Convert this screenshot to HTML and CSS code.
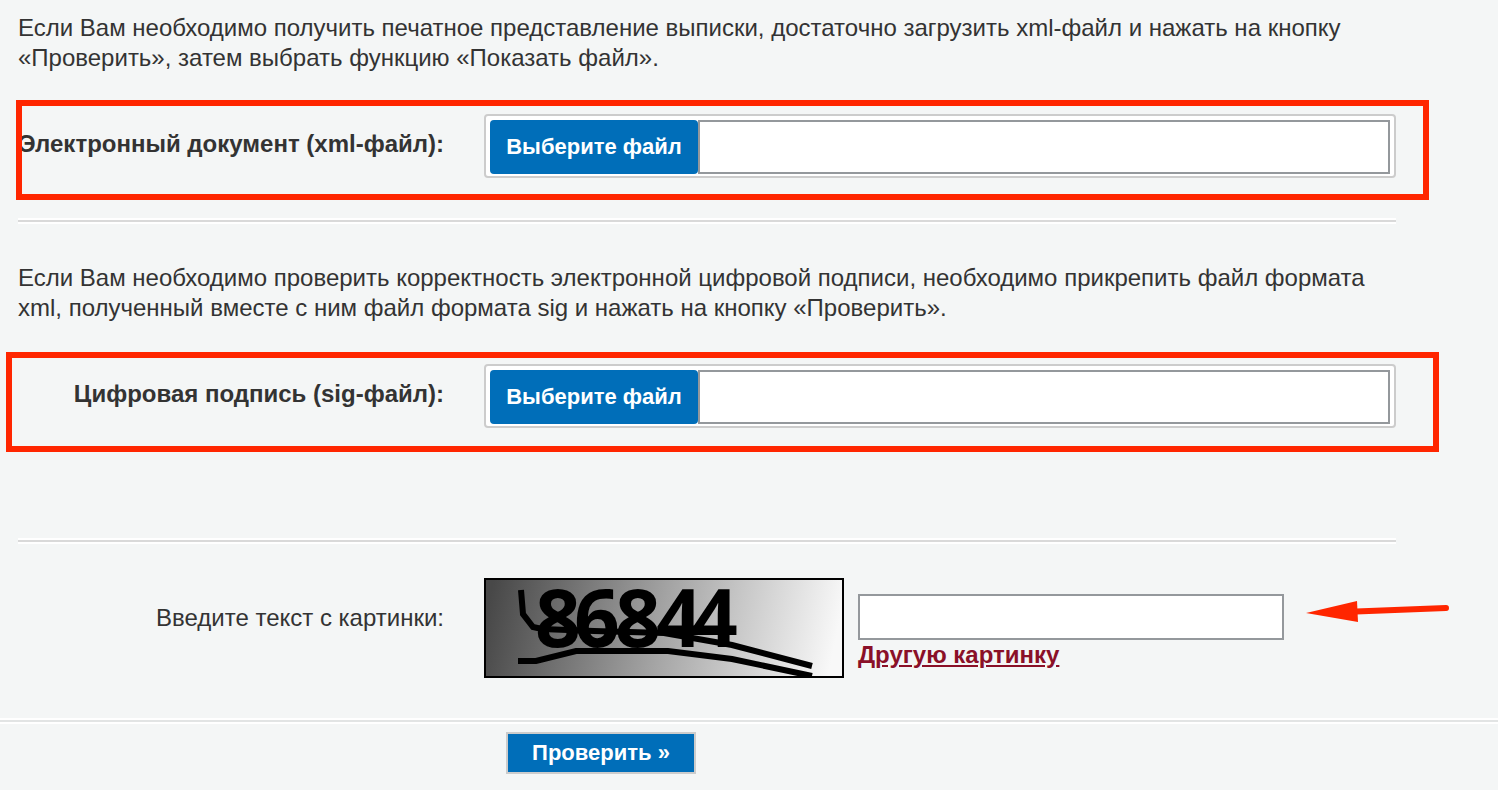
FILE: index.html
```html
<!DOCTYPE html>
<html lang="ru">
<head>
    <meta charset="UTF-8">
    <meta name="viewport" content="width=device-width, initial-scale=1.0">
    <title>Проверка электронного документа</title>
    <link rel="stylesheet" href="styles.css">
</head>
<body>
    <form class="check-form">
        <div class="fields">
            <p class="hint">Если Вам необходимо получить печатное представление выписки, достаточно загрузить xml-файл и нажать на кнопку «Проверить», затем выбрать функцию «Показать файл».</p>
            <div class="row">
                <label class="row-label bold" for="xmlFile">Электронный документ (xml-файл):</label>
                <div class="file-box">
                    <button type="button" class="file-btn">Выберите файл</button>
                    <input type="text" class="file-name" id="xmlFile" readonly>
                </div>
                <div class="mark mark-xml"></div>
            </div>

            <hr class="divider">

            <p class="hint">Если Вам необходимо проверить корректность электронной цифровой подписи, необходимо прикрепить файл формата xml, полученный вместе с ним файл формата sig и нажать на кнопку «Проверить».</p>
            <div class="row row-sig">
                <label class="row-label bold" for="sigFile">Цифровая подпись (sig-файл):</label>
                <div class="file-box">
                    <button type="button" class="file-btn">Выберите файл</button>
                    <input type="text" class="file-name" id="sigFile" readonly>
                </div>
                <div class="mark mark-sig"></div>
            </div>

            <hr class="divider">

            <div class="row captcha-row">
                <label class="row-label" for="captcha">Введите текст с картинки:</label>
                <div class="captcha">
                    <svg class="captcha-img" viewBox="0 0 360 100">
                        <defs>
                            <linearGradient id="shade" gradientUnits="userSpaceOnUse" x1="10" y1="0" x2="350" y2="70">
                                <stop offset="0" stop-color="#484848"/>
                                <stop offset="0.5" stop-color="#a4a4a4"/>
                                <stop offset="1" stop-color="#f8f8f8"/>
                            </linearGradient>
                        </defs>
                        <rect x="1" y="1" width="358" height="98" fill="url(#shade)" stroke="#000" stroke-width="2"/>
                        <text class="captcha-text" x="51 90 131 172 208" y="69">86844</text>
                        <g fill="none" stroke="#000" stroke-width="6">
                            <path d="M37 12L39 36L49 49L58 51L110 53L180 55L248 67L328 88"/>
                            <path d="M34 83H52L92 73H184L248 81L328 98"/>
                        </g>
                    </svg>
                    <div class="captcha-entry">
                        <input type="text" class="captcha-input" id="captcha">
                        <a href="#" class="captcha-link">Другую картинку</a>
                        <svg class="arrow" viewBox="0 0 144 24">
                            <path d="M0 13L51 1L52 22Z" fill="#ff2600"/>
                            <path d="M50 11.5L140 8" stroke="#ff2600" stroke-width="6" stroke-linecap="round"/>
                        </svg>
                    </div>
                </div>
            </div>
        </div>

        <hr class="divider divider-full">

        <div class="actions">
            <button type="submit" class="submit-btn">Проверить »</button>
        </div>
    </form>
</body>
</html>
```
FILE: styles.css
```css
* {
    box-sizing: border-box;
    margin: 0;
    padding: 0;
}

body {
    background: #fff;
    color: #333;
    font-family: "Liberation Sans", Arial, sans-serif;
    font-size: 24px;
    line-height: 30px;
}

.check-form {
    background: #f4f6f6;
    overflow: hidden;
}

.fields {
    padding: 13px 102px 40px 18px;
}

/* grey line with a white edge on both sides */
.divider {
    height: 6px;
    margin: 40px 0 39px;
    border: solid #fff;
    border-width: 2px 0;
    background: #d9d9d9;
}

.divider-full {
    margin: 0;
    background: #e2e4e4;
}

.row {
    display: flex;
    gap: 40px;
    margin-top: 41px;
    position: relative;
}

.row-sig {
    margin-bottom: 110px;
}

.row-label {
    flex: 0 0 426px;
    padding-top: 15px;
    text-align: right;
    white-space: nowrap;
}

.bold {
    font-weight: bold;
}

.file-box {
    flex: 1;
    display: flex;
    padding: 4px 4px 2px;
    background: #fff;
    border: 2px solid #ccc;
    border-radius: 4px;
}

.file-btn {
    width: 208px;
    height: 54px;
    background: #006eb9;
    color: #fff;
    border: none;
    border-radius: 4px;
    font: bold 22px "Liberation Sans", Arial, sans-serif;
    white-space: nowrap;
    cursor: pointer;
}

.file-name {
    flex: 1;
    min-width: 0;
    height: 54px;
    padding: 0 10px;
    background: #fff;
    border: 2px solid #94989c;
    font: inherit;
}

/* red frames around the file rows */
.mark {
    position: absolute;
    border: 6px solid #ff2600;
    pointer-events: none;
}

.mark-xml {
    top: -14px;
    right: -33px;
    bottom: -22px;
    left: -2px;
}

.mark-sig {
    top: -12px;
    right: -43px;
    bottom: -24px;
    left: -12px;
}

.captcha-row {
    margin-top: -5px;
}

.captcha-row .row-label {
    padding-top: 25px;
}

.captcha {
    display: flex;
    flex: 1;
    gap: 14px;
}

.captcha-img {
    flex: none;
    width: 360px;
    height: 100px;
}

.captcha-text {
    font-family: "Open Sans", "Noto Sans", sans-serif;
    font-size: 80px;
    font-weight: bold;
}

.captcha-entry {
    flex: 0 1 426px;
    position: relative;
    padding-top: 16px;
}

.captcha-input {
    display: block;
    width: 100%;
    height: 46px;
    padding: 0 10px;
    background: #fff;
    border: 2px solid #94989c;
    font: inherit;
}

.captcha-link {
    color: #8a1028;
    font-weight: bold;
}

.arrow {
    position: absolute;
    top: 22px;
    left: 100%;
    width: 144px;
    height: 24px;
    margin-left: 22px;
}

.actions {
    padding: 8px 0 16px 506px;
}

.submit-btn {
    display: block;
    width: 190px;
    height: 42px;
    background: #006eb9;
    color: #fff;
    border: 2px solid #ccc;
    font: bold 22px "Liberation Sans", Arial, sans-serif;
    cursor: pointer;
}
```
